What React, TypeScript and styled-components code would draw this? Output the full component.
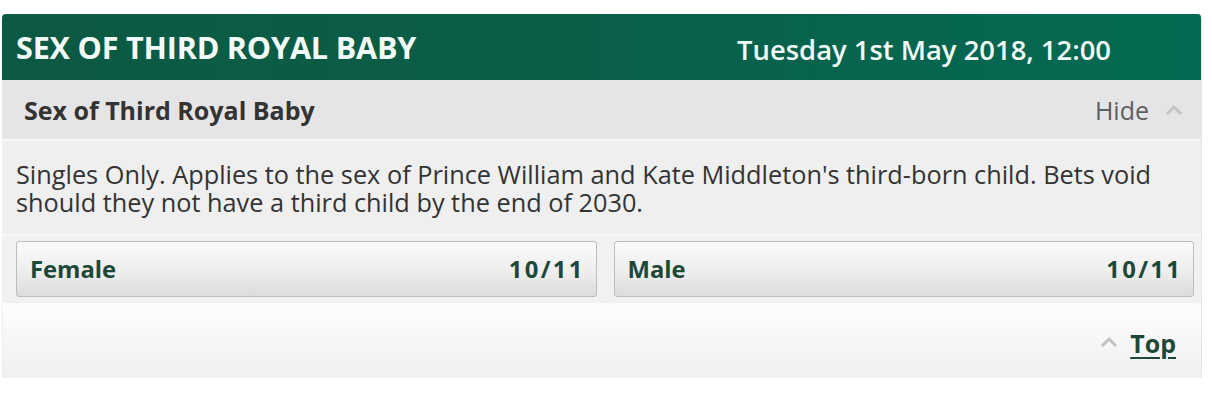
import styled, { createGlobalStyle } from 'styled-components';

const GlobalStyle = createGlobalStyle`
  html, body {
    margin: 0;
    padding: 0;
    background: #ffffff;
  }
  body {
    font-family: 'Open Sans', 'Noto Sans', sans-serif;
  }
`;

const selections = [
  { name: 'Female', price: '10/11' },
  { name: 'Male', price: '10/11' },
];

const Page = styled.div`
  padding: 14px 11px 0 2px;
`;

const Panel = styled.div`
  width: 1199px;
  border-right: 1px solid #e6e6e6;
  border-radius: 4px 4px 0 0;
  overflow: hidden;
`;

const Header = styled.div`
  height: 66px;
  display: flex;
  align-items: center;
  justify-content: space-between;
  padding: 0 90px 0 14px;
  background: linear-gradient(90deg, #0c5943 0%, #0a5e48 45%, #056a53 100%);
  color: #f2fbf8;
`;

const Title = styled.h1`
  margin: 0;
  font-size: 30.6px;
  font-weight: 700;
  letter-spacing: -0.2px;
`;

const Date = styled.span`
  font-size: 27.4px;
  font-weight: 600;
  padding-top: 4px;
`;

const MarketBar = styled.div`
  height: 59px;
  display: flex;
  align-items: center;
  justify-content: space-between;
  padding: 0 18px 0 22px;
  background: #e5e4e6;
  border-bottom: 2px solid #f7f7f7;
`;

const MarketName = styled.h2`
  margin: 0;
  font-size: 25px;
  font-weight: 700;
  color: #333333;
`;

const Toggle = styled.span`
  display: flex;
  align-items: center;
  gap: 16px;
  font-size: 25px;
  color: #5f5f5f;
`;

const Chevron = styled.svg<{ $color: string }>`
  width: 18px;
  height: 12px;
  fill: none;
  stroke: ${p => p.$color};
  stroke-width: 3;
`;

const Description = styled.p`
  margin: 0;
  padding: 19px 14px 18px;
  background: #efeff0;
  border-bottom: 2px solid #f8f8f8;
  font-size: 25.3px;
  line-height: 28px;
  color: #333333;
`;

const Selections = styled.div`
  display: grid;
  grid-template-columns: 1fr 1fr;
  gap: 17px;
  padding: 5px 7px 6px 14px;
  background: #f1f1f1;
  border-bottom: 2px solid #fafafa;
`;

const Selection = styled.button`
  height: 56px;
  display: flex;
  align-items: center;
  justify-content: space-between;
  padding: 0 13px;
  border: 1px solid #bcbcbc;
  border-radius: 3px;
  background: linear-gradient(180deg, #fbfbfb 0%, #ececec 60%, #dcdcdc 100%);
  font-family: inherit;
  font-size: 23.8px;
  font-weight: 700;
  color: #1d4838;
  cursor: pointer;
`;

const Price = styled.span`
  letter-spacing: 2.4px;
  margin-right: -2.4px;
`;

const Footer = styled.div`
  height: 73px;
  display: flex;
  align-items: center;
  justify-content: flex-end;
  gap: 12px;
  padding: 0 25px 0 0;
  background: linear-gradient(180deg, #fefdfe 0%, #f1f0f1 100%);
  border-left: 1px solid #ececec;
`;

const TopLink = styled.a`
  font-size: 25px;
  font-weight: 700;
  color: #1d4838;
  text-decoration: underline;
  text-underline-offset: 4px;
  padding-top: 2px;
`;

const ChevronUp = ({ color }: { color: string }) => (
  <Chevron $color={color} viewBox="0 0 18 12">
    <polyline points="2,10 9,3 16,10" />
  </Chevron>
);

export default function App() {
  return (
    <>
      <GlobalStyle />
      <Page>
        <Panel>
          <Header>
            <Title>SEX OF THIRD ROYAL BABY</Title>
            <Date>Tuesday 1st May 2018, 12:00</Date>
          </Header>
          <MarketBar>
            <MarketName>Sex of Third Royal Baby</MarketName>
            <Toggle>
              Hide
              <ChevronUp color="#c4c4c4" />
            </Toggle>
          </MarketBar>
          <Description>
            Singles Only. Applies to the sex of Prince William and Kate Middleton's third-born child. Bets void
            should they not have a third child by the end of 2030.
          </Description>
          <Selections>
            {selections.map(s => (
              <Selection key={s.name}>
                <span>{s.name}</span>
                <Price>{s.price}</Price>
              </Selection>
            ))}
          </Selections>
          <Footer>
            <ChevronUp color="#c2c2c2" />
            <TopLink href="#top">Top</TopLink>
          </Footer>
        </Panel>
      </Page>
    </>
  );
}
